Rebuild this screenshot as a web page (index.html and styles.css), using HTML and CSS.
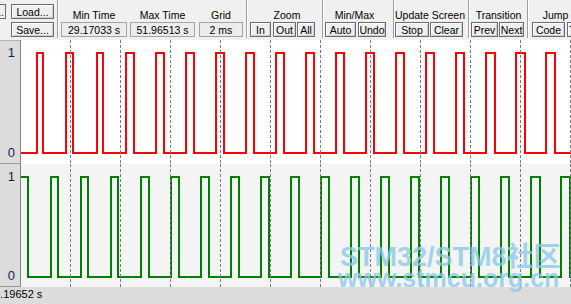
FILE: index.html
```html
<!DOCTYPE html>
<html>
<head>
<meta charset="utf-8">
<link rel="stylesheet" href="styles.css">
</head>
<body>
<div class="app">
  <div class="toolbar">
    <div class="grp g0">
      <div class="stub"><span>...</span></div>
      <div class="stack">
        <div class="btn">Load...</div>
        <div class="btn">Save...</div>
      </div>
    </div>
    <div class="sep"></div>
    <div class="grp g1">
      <div class="fld f-min"><div class="lbl">Min Time</div><div class="val">29.17033 s</div></div>
      <div class="fld f-max"><div class="lbl">Max Time</div><div class="val">51.96513 s</div></div>
      <div class="fld f-grid"><div class="lbl">Grid</div><div class="val">2 ms</div></div>
    </div>
    <div class="sep"></div>
    <div class="grp g2">
      <div class="lbl">Zoom</div>
      <div class="row">
        <div class="btn b-in">In</div>
        <div class="btn b-out">Out</div>
        <div class="btn b-all">All</div>
      </div>
    </div>
    <div class="sep"></div>
    <div class="grp g3">
      <div class="lbl">Min/Max</div>
      <div class="row">
        <div class="btn b-auto">Auto</div>
        <div class="btn b-undo">Undo</div>
      </div>
    </div>
    <div class="sep"></div>
    <div class="grp g4">
      <div class="lbl">Update Screen</div>
      <div class="row">
        <div class="btn b-stop">Stop</div>
        <div class="btn b-clear">Clear</div>
      </div>
    </div>
    <div class="sep"></div>
    <div class="grp g5">
      <div class="lbl">Transition</div>
      <div class="row">
        <div class="btn b-prev">Prev</div>
        <div class="btn b-next">Next</div>
      </div>
    </div>
    <div class="sep"></div>
    <div class="grp g6">
      <div class="lbl">Jump</div>
      <div class="row">
        <div class="btn b-code">Code</div>
        <div class="btn b-trace">Trace</div>
      </div>
    </div>
  </div>

  <div class="graph">
    <div class="panel p1">
      <div class="lab"><span>1</span><span>0</span></div>
      <svg class="plot" width="550" height="124" viewBox="21 40 550 124">
        <path class="sig red" d="M21 153 H37 V53 H43 V153 H66 V53 H73 V153 H97 V53 H103 V153 H126 V53 H134 V153 H156 V53 H164 V153 H186 V53 H194 V153 H216 V53 H224 V153 H246 V53 H254 V153 H276 V53 H284 V153 H306 V53 H314 V153 H336 V53 H344 V153 H366 V53 H374 V153 H396 V53 H404 V153 H426 V53 H434 V153 H456 V53 H464 V153 H486 V53 H495 V153 H516 V53 H525 V153 H546 V53 H555 V153 H572"/>
        <g class="grid">
          <line x1="70.5" y1="40" x2="70.5" y2="164"/>
          <line x1="120.5" y1="40" x2="120.5" y2="164"/>
          <line x1="170.5" y1="40" x2="170.5" y2="164"/>
          <line x1="220.5" y1="40" x2="220.5" y2="164"/>
          <line x1="270.5" y1="40" x2="270.5" y2="164"/>
          <line x1="320.5" y1="40" x2="320.5" y2="164"/>
          <line x1="370.5" y1="40" x2="370.5" y2="164"/>
          <line x1="420.5" y1="40" x2="420.5" y2="164"/>
          <line x1="470.5" y1="40" x2="470.5" y2="164"/>
          <line x1="520.5" y1="40" x2="520.5" y2="164"/>
          <line x1="570.5" y1="40" x2="570.5" y2="164"/>
        </g>
      </svg>
    </div>
    <div class="panel p2">
      <div class="lab"><span>1</span><span>0</span></div>
      <svg class="plot" width="550" height="123" viewBox="21 164 550 123">
        <path class="sig green" d="M21 177 H28 V277 H51 V177 H58 V277 H81 V177 H88 V277 H111 V177 H118 V277 H141 V177 H149 V277 H171 V177 H179 V277 H201 V177 H209 V277 H231 V177 H239 V277 H261 V177 H269 V277 H291 V177 H299 V277 H321 V177 H329 V277 H351 V177 H359 V277 H381 V177 H389 V277 H411 V177 H419 V277 H441 V177 H449 V277 H471 V177 H479 V277 H501 V177 H509 V277 H531 V177 H540 V277 H561 V177 H570 V277 H572"/>
        <g class="grid">
          <line x1="70.5" y1="164" x2="70.5" y2="287"/>
          <line x1="120.5" y1="164" x2="120.5" y2="287"/>
          <line x1="170.5" y1="164" x2="170.5" y2="287"/>
          <line x1="220.5" y1="164" x2="220.5" y2="287"/>
          <line x1="270.5" y1="164" x2="270.5" y2="287"/>
          <line x1="320.5" y1="164" x2="320.5" y2="287"/>
          <line x1="370.5" y1="164" x2="370.5" y2="287"/>
          <line x1="420.5" y1="164" x2="420.5" y2="287"/>
          <line x1="470.5" y1="164" x2="470.5" y2="287"/>
          <line x1="520.5" y1="164" x2="520.5" y2="287"/>
          <line x1="570.5" y1="164" x2="570.5" y2="287"/>
        </g>
      </svg>
    </div>
  </div>

  <div class="status"><span class="stxt">0.19652 s</span></div>

  <div class="wm wm1">STM32/STM8社区</div>
  <div class="wm wm2">www.stmcu.org.cn</div>
</div>
</body>
</html>
```

FILE: styles.css
```css
html, body {
  margin: 0;
  padding: 0;
}

body {
  width: 571px;
  height: 304px;
  overflow: hidden;
  background: #f0f0f0;
  font-family: "Liberation Sans", Arial, sans-serif;
}

.app {
  position: relative;
  width: 571px;
  height: 304px;
  overflow: hidden;
  display: flex;
  flex-direction: column;
}

/* ---------- toolbar ---------- */
.toolbar {
  flex: none;
  height: 40px;
  display: flex;
  overflow: hidden;
  background: #f0f0f0;
  font-size: 10.5px;
  color: #000;
}

.grp {
  flex: none;
  display: flex;
  flex-direction: column;
}

.sep {
  flex: none;
  width: 2px;
  height: 38px;
  box-sizing: border-box;
  border-left: 1px solid #a0a0a0;
  border-right: 1px solid #ffffff;
}

.lbl {
  height: 22px;
  box-sizing: border-box;
  padding-top: 9px;
  line-height: 12px;
  text-align: center;
  white-space: nowrap;
}

.row {
  display: flex;
}

.btn {
  flex: none;
  box-sizing: border-box;
  height: 15px;
  border: 1px solid #6c6c6c;
  background: #efefef;
  box-shadow: inset 1px 1px 0 #ffffff, inset -1px -1px 0 #cfcfcf;
  padding-top: 1px;
  line-height: 12px;
  text-align: center;
  white-space: nowrap;
  overflow: hidden;
}

.val {
  box-sizing: border-box;
  height: 15px;
  border: 1px solid #a4a4a4;
  background: #ececec;
  padding-top: 1px;
  line-height: 12px;
  text-align: center;
  white-space: nowrap;
}

/* group 0 : file buttons */
.g0 {
  width: 57px;
  flex-direction: row;
}

.stub {
  flex: none;
  width: 6px;
  height: 15px;
  margin-top: 4px;
  box-sizing: border-box;
  border: 1px solid #6c6c6c;
  border-left: none;
  background: #efefef;
  display: flex;
  justify-content: flex-end;
  overflow: hidden;
  line-height: 12px;
  padding-top: 1px;
  white-space: nowrap;
}

.stub span {
  flex: none;
  padding-right: 1px;
}

.stack {
  margin-left: 5px;
  padding-top: 4px;
  width: 43px;
  display: flex;
  flex-direction: column;
  gap: 3px;
}

/* group 1 : fields */
.g1 {
  width: 187px;
  flex-direction: row;
  padding-left: 2px;
  box-sizing: border-box;
}

.fld {
  display: flex;
  flex-direction: column;
}

.f-min { width: 66px; }
.f-max { width: 65px; margin-left: 3px; }
.f-grid { width: 44px; margin-left: 4px; }

/* group 2 : zoom */
.g2 { width: 74px; }
.g2 .lbl { padding-left: 4px; }
.b-in { width: 21px; margin-left: 2px; }
.b-out { width: 23px; margin-left: 2px; }
.b-all { width: 18px; margin-left: 1px; }

/* group 3 : min/max */
.g3 { width: 69px; }
.g3 .lbl { padding-right: 8px; }
.b-auto { width: 31px; margin-left: 1px; }
.b-undo { width: 28px; margin-left: 2px; }

/* group 4 : update screen */
.g4 { width: 73px; }
.g4 .lbl { padding-right: 3px; }
.b-stop { width: 34px; margin-left: 0; }
.b-clear { width: 33px; margin-left: 1px; }

/* group 5 : transition */
.g5 { width: 57px; }
.b-prev { width: 27px; margin-left: 1px; }
.b-next { width: 25px; margin-left: 1px; }

/* group 6 : jump */
.g6 { width: 56px; }
.g6 .lbl { padding-right: 3px; }
.b-code { width: 33px; margin-left: 3px; }
.b-trace { width: 30px; margin-left: 2px; text-align: left; padding-left: 1px; }

/* ---------- graph ---------- */
.graph {
  flex: none;
  display: flex;
  flex-direction: column;
}

.panel {
  display: flex;
}

.p1 {
  height: 124px;
  background: #ffffff;
}

.p2 {
  height: 123px;
  background: #f4f4f4;
}

.lab {
  flex: none;
  width: 21px;
  box-sizing: border-box;
  background: #dcdcdc;
  border-right: 1px solid #858585;
  border-bottom: 1px solid #9a9a9a;
  padding: 6px 5px 4px 0;
  display: flex;
  flex-direction: column;
  justify-content: space-between;
  align-items: flex-end;
  font-size: 13px;
  line-height: 13px;
  color: #1c1c4c;
}

.p1 .lab {
  box-shadow: inset 0 1px 0 #b4b4b4;
}

.plot {
  display: block;
  flex: none;
}

.sig {
  fill: none;
  stroke-width: 2;
}

.red { stroke: #ff0000; }
.green { stroke: #008000; }

.grid line {
  stroke: #7c7c7c;
  stroke-width: 1;
  stroke-dasharray: 3 2;
}

/* ---------- status bar ---------- */
.status {
  flex: none;
  height: 17px;
  background: #dcdcdc;
  font-size: 11px;
  line-height: 15px;
  color: #000;
  white-space: nowrap;
  overflow: hidden;
}

.stxt {
  display: inline-block;
  margin-left: -6px;
}

/* ---------- watermark ---------- */
.wm {
  position: absolute;
  white-space: nowrap;
  font-family: "Liberation Sans", "Noto Sans CJK SC", sans-serif;
  font-weight: bold;
  color: rgba(139, 201, 231, 0.8);
  pointer-events: none;
}

.wm1 {
  left: 340px;
  top: 247px;
  height: 20px;
  font-size: 27px;
  line-height: 20px;
}

.wm2 {
  left: 338px;
  top: 269px;
  height: 18px;
  font-size: 25px;
  line-height: 18px;
}
```
